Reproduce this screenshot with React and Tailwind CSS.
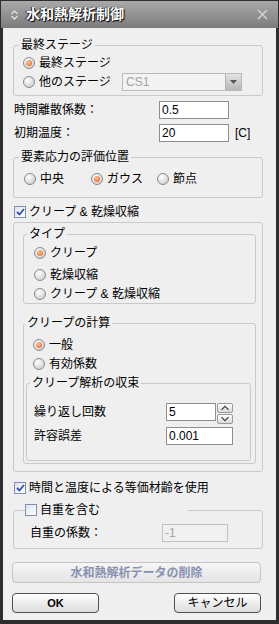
import React from 'react';

const Radio = ({ checked }) => (
  <span className="w-[12px] h-[12px] shrink-0 rounded-full border border-[#8a8a8a] bg-[radial-gradient(circle_at_35%_30%,#ffffff,#c4c4c4)] flex items-center justify-center">
    {checked && (
      <span className="w-[6px] h-[6px] rounded-full bg-[radial-gradient(circle_at_40%_35%,#ffc39a,#e85a1c)]" />
    )}
  </span>
);

const Check = ({ checked }) => (
  <span className="w-[12px] h-[12px] shrink-0 border border-[#7d8fb5] bg-[linear-gradient(135deg,#dfe3ec,#ffffff)] flex items-center justify-center">
    {checked && (
      <svg width="9" height="8" viewBox="0 0 9 8">
        <path d="M1 4 L3.5 6.5 L8 1" fill="none" stroke="#3550b0" strokeWidth="1.8" />
      </svg>
    )}
  </span>
);

const RadioItem = ({ checked, label, className = '' }) => (
  <div className={`flex items-center gap-[4px] ${className}`}>
    <Radio checked={checked} />
    <span>{label}</span>
  </div>
);

const TextBox = ({ value, className = '', disabled }) => (
  <div
    className={`h-[18px] border flex items-center pl-[2px] ${
      disabled ? 'border-[#c2c2c2] bg-[#f0f0f0] text-[#a3a3a3]' : 'border-[#8e8e8e] bg-white text-black'
    } ${className}`}
  >
    {value}
  </div>
);

const Legend = ({ children, className = '' }) => (
  <legend className={`px-[2px] leading-[14px] ${className}`}>{children}</legend>
);

const Spinner = () => (
  <div className="w-[16px] h-[18px] ml-[1px] flex flex-col gap-[1px]">
    {['M4 6 L8 2 L12 6', 'M4 2 L8 6 L12 2'].map((d) => (
      <div key={d} className="flex-1 border border-[#9a9a9a] rounded-[2px] bg-[linear-gradient(#ffffff,#dadada)] flex items-center justify-center">
        <svg width="16" height="8" viewBox="0 0 16 8">
          <path d={d} fill="none" stroke="#444" strokeWidth="1.3" />
        </svg>
      </div>
    ))}
  </div>
);

export default function App() {
  return (
    <div className="w-[279px] h-[624px] bg-[#2e2e2e] pt-[1px] px-[3px] pb-[4px] flex flex-col text-[12px] text-black font-[family-name:'Liberation_Sans','Noto_Sans_CJK_JP',sans-serif]">
      {/* title bar */}
      <div className="h-[27px] -mx-[2px] bg-[linear-gradient(#a9a9a9,#7b7b7b)] flex items-center pl-[9px] pr-[10px]">
        <svg width="9" height="12" viewBox="0 0 9 12">
          <path d="M1.5 5 L4.5 2 L7.5 5 M1.5 7 L4.5 10 L7.5 7" fill="none" stroke="#e2e2e2" strokeWidth="1.3" />
        </svg>
        <span className="ml-[7px] text-[14px] font-bold text-white [text-shadow:1px_1px_1px_#000,-1px_0_1px_#222]">
          水和熱解析制御
        </span>
        <svg className="ml-auto" width="11" height="11" viewBox="0 0 11 11">
          <path d="M1 1 L10 10 M10 1 L1 10" stroke="#d0d0d0" strokeWidth="1.6" />
        </svg>
      </div>

      {/* body */}
      <div className="flex-1 bg-[#efefef] pl-[9px] pr-[13px] flex flex-col">
        {/* 最終ステージ */}
        <fieldset className="mt-[10px] ml-[1px] border border-[#c9c9c9] rounded-[3px]">
          <Legend className="ml-[5px]">最終ステージ</Legend>
          <div className="pt-[1px] pb-[4px] pl-[9px]">
            <RadioItem checked label="最終ステージ" className="h-[19px]" />
            <div className="h-[19px] flex items-center">
              <RadioItem label="他のステージ" className="w-[99px]" />
              <div className="w-[120px] h-[18px] border border-[#b9b9b9] bg-[#f3f3f3] flex items-center">
                <span className="flex-1 pl-[3px] text-[#a3a3a3]">CS1</span>
                <div className="w-[16px] h-full border-l border-[#b0b0b0] bg-[linear-gradient(#e4e4e4,#b5b5b5)] flex items-center justify-center">
                  <svg width="7" height="4" viewBox="0 0 7 4">
                    <path d="M0 0 L7 0 L3.5 4 Z" fill="#555" />
                  </svg>
                </div>
              </div>
            </div>
          </div>
        </fieldset>

        {/* 係数 */}
        <div className="mt-[4px] h-[20px] flex items-center">
          <span className="ml-[2px] w-[145px]">時間離散係数：</span>
          <TextBox value="0.5" className="w-[70px]" />
        </div>
        <div className="mt-[3px] h-[20px] flex items-center">
          <span className="ml-[2px] w-[145px]">初期温度：</span>
          <TextBox value="20" className="w-[70px]" />
          <span className="ml-[6px]">[C]</span>
        </div>

        {/* 要素応力の評価位置 */}
        <fieldset className="mt-[7px] ml-[1px] border border-[#c9c9c9] rounded-[3px]">
          <Legend className="ml-[5px]">要素応力の評価位置</Legend>
          <div className="pt-[5px] pb-[8px] pl-[10px] h-[20px] box-content flex items-center">
            <RadioItem label="中央" className="w-[67px]" />
            <RadioItem checked label="ガウス" className="w-[66px]" />
            <RadioItem label="節点" />
          </div>
        </fieldset>

        {/* クリープ & 乾燥収縮 */}
        <div className="mt-[5px] h-[18px] ml-[2px] flex items-center gap-[3px]">
          <Check checked />
          <span>クリープ &amp; 乾燥収縮</span>
        </div>

        <div className="mt-[1px] ml-[1px] border border-[#c9c9c9] rounded-[3px] pt-[4px] pb-[7px] pl-[9px] pr-[6px]">
          <fieldset className="border border-[#c9c9c9] rounded-[3px]">
            <Legend className="ml-[3px]">タイプ</Legend>
            <div className="pb-[1px] pl-[10px]">
              <RadioItem checked label="クリープ" className="mt-[4px] h-[16px]" />
              <RadioItem label="乾燥収縮" className="mt-[6px] h-[16px]" />
              <RadioItem label="クリープ & 乾燥収縮" className="mt-[3px] h-[16px]" />
            </div>
          </fieldset>

          <fieldset className="mt-[12px] border border-[#c9c9c9] rounded-[3px]">
            <Legend className="ml-[1px]">クリープの計算</Legend>
            <div className="pt-[5px] pb-[2px]">
              <div className="pl-[9px]">
                <RadioItem checked label="一般" className="h-[19px]" />
                <RadioItem label="有効係数" className="h-[19px]" />
              </div>
              <fieldset className="mt-[3px] ml-[2px] mr-[4px] border border-[#c9c9c9] rounded-[3px]">
                <Legend className="ml-[3px]">クリープ解析の収束</Legend>
                <div className="pt-[13px] pb-[15px] pl-[7px]">
                  <div className="h-[18px] flex items-center">
                    <span className="w-[132px]">繰り返し回数</span>
                    <TextBox value="5" className="w-[50px]" />
                    <Spinner />
                  </div>
                  <div className="mt-[6px] h-[18px] flex items-center">
                    <span className="w-[132px]">許容誤差</span>
                    <TextBox value="0.001" className="w-[67px]" />
                  </div>
                </div>
              </fieldset>
            </div>
          </fieldset>
        </div>

        {/* 等価材齢 */}
        <div className="mt-[7px] h-[18px] ml-[2px] flex items-center gap-[3px]">
          <Check checked />
          <span>時間と温度による等価材齢を使用</span>
        </div>

        {/* 自重 */}
        <fieldset className="mt-[6px] ml-[1px] border border-[#c9c9c9] rounded-[3px]">
          <legend className="ml-[11px] w-[163px] h-[14px] flex items-center gap-[3px]">
            <Check />
            <span>自重を含む</span>
          </legend>
          <div className="pt-[7px] pb-[6px] pl-[16px]">
            <div className="h-[18px] flex items-center">
              <span className="w-[132px]">自重の係数：</span>
              <TextBox value="-1" disabled className="w-[66px]" />
            </div>
          </div>
        </fieldset>

        {/* buttons */}
        <button
          type="button"
          disabled
          className="mt-[13px] w-[249px] h-[21px] border border-[#c4c4c4] rounded-[4px] bg-[linear-gradient(#f6f6f6,#e4e4e4)] font-bold text-[#8991b1]"
        >
          水和熱解析データの削除
        </button>
        <div className="mt-[10px] w-[249px] flex justify-between">
          <button
            type="button"
            className="w-[87px] h-[20px] border border-[#505050] rounded-[4px] bg-[linear-gradient(#ffffff,#dcdcdc)] font-bold text-[11px]"
          >
            OK
          </button>
          <button
            type="button"
            className="w-[87px] h-[20px] border border-[#505050] rounded-[4px] bg-[linear-gradient(#ffffff,#dcdcdc)]"
          >
            キャンセル
          </button>
        </div>
      </div>
    </div>
  );
}
